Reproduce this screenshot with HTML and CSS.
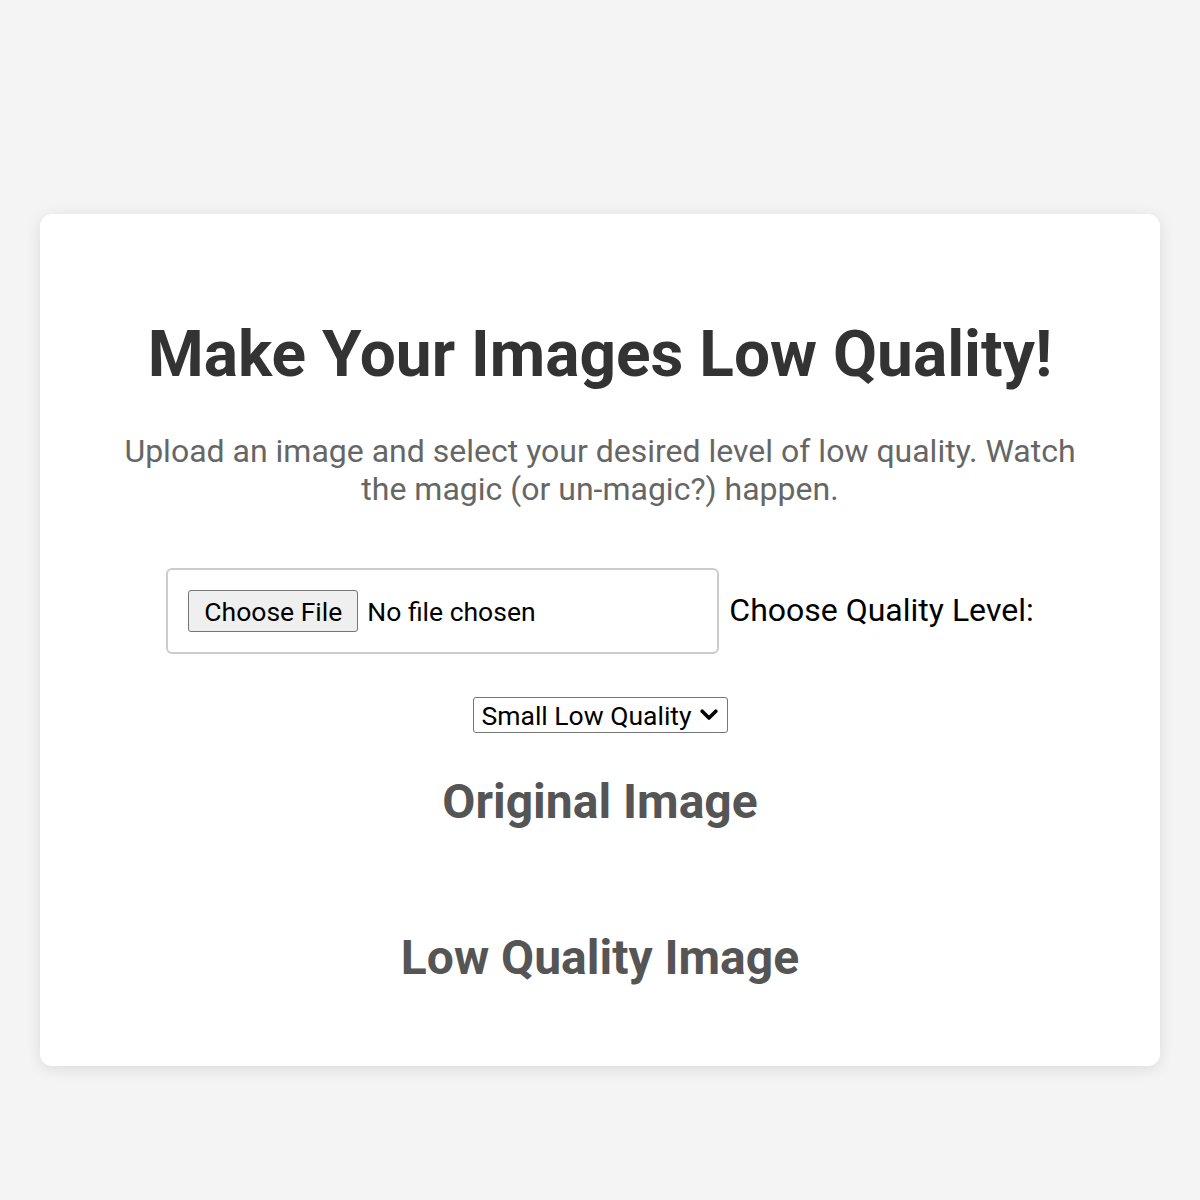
FILE: index.html
```html
<!DOCTYPE html>
<html lang="en">
<head>
<meta charset="utf-8">
<title>Make Your Images Low Quality!</title>
<link rel="stylesheet" href="styles.css">
</head>
<body>
  <main class="card">
    <h1 class="title">Make Your Images Low Quality!</h1>
    <p class="subtitle">Upload an image and select your desired level of low quality. Watch the magic (or un-magic?) happen.</p>
    <div class="controls">
      <input class="file-input" type="file" accept="image/*">
      <label class="quality-label" for="quality">Choose Quality Level:</label>
      <select class="quality-select" id="quality">
        <option>Small Low Quality</option>
        <option>Medium Low Quality</option>
        <option>Extreme Low Quality</option>
      </select>
    </div>
    <section class="result">
      <h2 class="result-title">Original Image</h2>
      <div class="image-slot"></div>
    </section>
    <section class="result">
      <h2 class="result-title">Low Quality Image</h2>
      <div class="image-slot"></div>
    </section>
  </main>
</body>
</html>
```
FILE: styles.css
```css
html, body {
  margin: 0;
  padding: 0;
  background: #f4f4f4;
  font-family: Roboto, "Liberation Sans", sans-serif;
}

body {
  padding: 214px 40px 134px;
}

.card {
  background: #ffffff;
  border-radius: 12px;
  box-shadow: 0 3px 15px rgba(0, 0, 0, 0.1);
  padding: 102px 80px 60px;
  text-align: center;
  height: 852px;
  box-sizing: border-box;
}

.title {
  margin: 0;
  font-size: 64px;
  line-height: 77px;
  font-weight: 700;
  color: #333333;
}

.subtitle {
  margin: 39px 0 0;
  font-size: 32px;
  line-height: 38px;
  color: #666666;
}

.controls {
  margin-top: 60px;
  display: flex;
  flex-wrap: wrap;
  justify-content: center;
  align-items: baseline;
  column-gap: 10px;
  row-gap: 43px;
}

.file-input {
  box-sizing: border-box;
  width: 553px;
  padding: 20px;
  border: 2px solid #cccccc;
  border-radius: 6px;
  font-family: Roboto, "Liberation Sans", sans-serif;
  font-size: 26.5px;
  color: #000000;
  text-align: left;
}

.file-input::file-selector-button {
  font-family: Roboto, "Liberation Sans", sans-serif;
  font-size: 26.5px;
  padding: 4.5px 15px;
  margin-right: 9px;
  background: #efefef;
  border: 1px solid #767676;
  border-radius: 3px;
  color: #000000;
}

.quality-label {
  font-size: 32px;
  color: #000000;
}

.quality-select {
  box-sizing: border-box;
  width: 255px;
  height: 36px;
  padding: 0 34px 0 8px;
  font-family: Roboto, "Liberation Sans", sans-serif;
  font-size: 26.5px;
  border: 1px solid #767676;
  border-radius: 3px;
  color: #000000;
  -webkit-appearance: none;
  appearance: none;
  background: #ffffff url("data:image/svg+xml,%3Csvg xmlns='http://www.w3.org/2000/svg' width='18' height='12' viewBox='0 0 18 12'%3E%3Cpath d='M2.2 2.2 L9 9 L15.8 2.2' fill='none' stroke='%23000' stroke-width='3.6' stroke-linecap='round' stroke-linejoin='round'/%3E%3C/svg%3E") no-repeat right 9px center / 18px 12px;
}

.result {
  margin-top: 41px;
}

.result-title {
  margin: 0;
  font-size: 48px;
  line-height: 56px;
  font-weight: 700;
  color: #555555;
}

.image-slot {
  min-height: 59px;
}
```
